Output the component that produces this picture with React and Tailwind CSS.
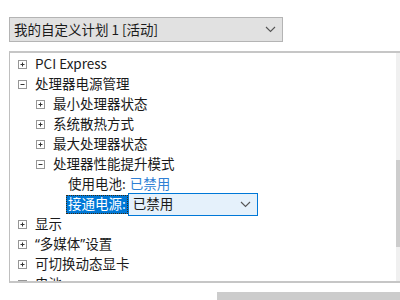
import React from "react";

const Chevron = ({ className = "" }) => (
  <svg width="11" height="7" viewBox="0 0 11 7" className={className}>
    <path d="M1 1l4.5 4.5L10 1" fill="none" stroke="#555" strokeWidth="1.1" />
  </svg>
);

const Expander = ({ open }) => (
  <svg width="9" height="9" viewBox="0 0 9 9" className="shrink-0">
    <rect x="0.5" y="0.5" width="8" height="8" fill="#fff" stroke="#969696" />
    <path d="M2.5 4.5h4" stroke="#333" strokeWidth="1" />
    {!open && <path d="M4.5 2.5v4" stroke="#333" strokeWidth="1" />}
  </svg>
);

const Q = ({ children }) => (
  <span style={{ fontFamily: '"Noto Sans", sans-serif' }}>{children}</span>
);

const rows = [
  { level: 0, label: "PCI Express", open: false },
  { level: 0, label: "处理器电源管理", open: true },
  { level: 1, label: "最小处理器状态", open: false },
  { level: 1, label: "系统散热方式", open: false },
  { level: 1, label: "最大处理器状态", open: false },
  { level: 1, label: "处理器性能提升模式", open: true },
];

const rowsAfter = [
  { level: 0, label: "显示", open: false },
  { level: 0, label: <><Q>“</Q>多媒体<Q>”</Q>设置</>, key: "mm", open: false },
  { level: 0, label: "可切换动态显卡", open: false },
  { level: 0, label: "电池", open: false },
];

function Row({ row }) {
  return (
    <div className={`flex items-center h-5 gap-[8px] ${row.level === 0 ? "pl-[8px]" : "pl-[26px]"}`}>
      <Expander open={row.open} />
      <span>{row.label}</span>
    </div>
  );
}

export default function App() {
  return (
    <div
      className="w-[400px] h-[300px] bg-white overflow-hidden text-[13.5px] text-[#1a1a1a] leading-none"
      style={{ fontFamily: '"Noto Sans CJK SC", "Noto Sans", sans-serif' }}
    >
      <div className="pt-[17px] pl-[9px]">
        <div className="w-[274px] h-[25px] bg-[#e1e1e1] border border-[#b4b4b4] flex items-center justify-between pl-[4px] pr-[6px]">
          <span>我的自定义计划 1 [活动]</span>
          <Chevron />
        </div>
      </div>

      <div className="mt-[9px] ml-[9px] h-[232px] border-t-2 border-b-2 border-l border-t-[#c6c6c6] border-b-[#c6c6c6] border-l-[#bfbfbf] flex">
        <div className="flex-1 overflow-hidden pt-px">
          {rows.map((r) => (
            <Row key={r.key || r.label} row={r} />
          ))}
          <div className="flex items-center h-5 pl-[58px]">
            <span>使用电池:</span>
            <span className="ml-[4px] text-[#2f7fd4]">已禁用</span>
          </div>
          <div className="flex items-center h-5 pl-[56px] relative z-10">
            <span className="h-[19px] flex items-center px-px bg-[#0078d7] text-white border border-dotted border-[#3a2a10]">
              接通电源:
            </span>
            <div className="w-[130px] h-[23px] bg-[#e5f1fb] border border-[#0078d7] flex items-center justify-between pl-[4px] pr-[6px]">
              <span>已禁用</span>
              <Chevron />
            </div>
          </div>
          {rowsAfter.map((r) => (
            <Row key={r.key || r.label} row={r} />
          ))}
        </div>
        <div className="w-[4px] bg-[#f0f0f0] flex flex-col">
          <div className="h-[107px]" />
          <div className="h-[87px] bg-[#cdcdcd]" />
        </div>
      </div>

      <div className="mt-[9px] ml-[217px] h-[20px] bg-[#cccccc]" />
    </div>
  );
}
